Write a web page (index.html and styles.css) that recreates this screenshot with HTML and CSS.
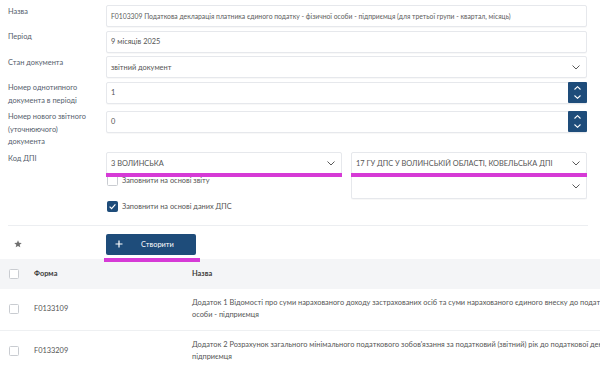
FILE: index.html
```html
<!DOCTYPE html>
<html lang="uk">
<head>
<meta charset="utf-8">
<title>Створення документа</title>
<link rel="stylesheet" href="styles.css">
</head>
<body>
<div class="page">
  <form class="form">
    <div class="row">
      <div class="lbl">Назва</div>
      <div class="input name">F0103309 Податкова декларація платника єдиного податку - фізичної особи - підприємця (для третьої групи - квартал, місяць)</div>
    </div>
    <div class="row">
      <div class="lbl">Період</div>
      <div class="input">9 місяців 2025</div>
    </div>
    <div class="row">
      <div class="lbl">Стан документа</div>
      <div class="input select">звітний документ
        <svg class="chev" viewBox="0 0 8 5" width="8" height="5"><polyline points="0.5,0.5 4,4 7.5,0.5"/></svg>
      </div>
    </div>
    <div class="row">
      <div class="lbl">Номер однотипного документа в періоді</div>
      <div class="input num">1
        <span class="spin">
          <svg viewBox="0 0 7 4" width="7" height="4"><polyline points="0.5,3.5 3.5,0.7 6.5,3.5"/></svg>
          <svg viewBox="0 0 7 4" width="7" height="4"><polyline points="0.5,0.5 3.5,3.3 6.5,0.5"/></svg>
        </span>
      </div>
    </div>
    <div class="row">
      <div class="lbl">Номер нового звітного (уточнюючого) документа</div>
      <div class="input num">0
        <span class="spin">
          <svg viewBox="0 0 7 4" width="7" height="4"><polyline points="0.5,3.5 3.5,0.7 6.5,3.5"/></svg>
          <svg viewBox="0 0 7 4" width="7" height="4"><polyline points="0.5,0.5 3.5,3.3 6.5,0.5"/></svg>
        </span>
      </div>
    </div>
    <div class="row">
      <div class="lbl">Код ДПІ</div>
      <div class="dpi">
        <div class="col">
          <div class="input select hl">3 ВОЛИНСЬКА
            <svg class="chev" viewBox="0 0 8 5" width="8" height="5"><polyline points="0.5,0.5 4,4 7.5,0.5"/></svg>
          </div>
          <div class="checks">
            <div class="check"><span class="box"></span>Заповнити на основі звіту</div>
            <div class="check"><span class="box on"><svg viewBox="0 0 11 11" width="11" height="11"><polyline points="2.6,5.6 4.6,7.6 8.4,3.4"/></svg></span>Заповнити на основі даних ДПС</div>
          </div>
        </div>
        <div class="col">
          <div class="input select hl">17 ГУ ДПС У ВОЛИНСЬКІЙ ОБЛАСТІ, КОВЕЛЬСЬКА ДПІ
            <svg class="chev" viewBox="0 0 8 5" width="8" height="5"><polyline points="0.5,0.5 4,4 7.5,0.5"/></svg>
          </div>
          <div class="input select tall">
            <svg class="chev" viewBox="0 0 8 5" width="8" height="5"><polyline points="0.5,0.5 4,4 7.5,0.5"/></svg>
          </div>
        </div>
      </div>
    </div>
  </form>
  <div class="sep"></div>
  <div class="toolbar">
    <svg class="star" viewBox="0 0 10 10" width="8" height="8"><polygon points="5,0.3 6.3,3.4 9.7,3.6 7.1,5.8 7.9,9.2 5,7.4 2.1,9.2 2.9,5.8 0.3,3.6 3.7,3.4"/></svg>
    <button type="button" class="btn hl-btn">
      <svg viewBox="0 0 8 8" width="8" height="8"><path d="M4 0.5V7.5M0.5 4H7.5"/></svg>
      <span>Створити</span>
    </button>
  </div>
  <div class="table-wrap">
    <table class="tbl">
      <colgroup><col class="c-chk"><col class="c-form"><col class="c-name"></colgroup>
      <thead>
        <tr><th><span class="box"></span></th><th>Форма</th><th>Назва</th></tr>
      </thead>
      <tbody>
        <tr>
          <td><span class="box"></span></td>
          <td>F0133109</td>
          <td>Додаток 1 Відомості про суми нарахованого доходу застрахованих осіб та суми нарахованого єдиного внеску до податкової декларації платника єдиного податку - фізичної особи - підприємця</td>
        </tr>
        <tr>
          <td><span class="box"></span></td>
          <td>F0133209</td>
          <td>Додаток 2 Розрахунок загального мінімального податкового зобов'язання за податковий (звітний) рік до податкової декларації платника єдиного податку - фізичної особи - підприємця</td>
        </tr>
      </tbody>
    </table>
  </div>
</div>
</body>
</html>
```

FILE: styles.css
```css
* { box-sizing: border-box; }
html, body { margin: 0; padding: 0; background: #fff; }
body {
  font-family: Lato, "Open Sans", "Liberation Sans", sans-serif;
  font-size: 7.4px;
  color: #555;
  width: 600px;
  height: 366px;
  overflow: hidden;
}
.page { width: 600px; }

.form {
  padding: 5px 13px 0 8px;
  display: flex;
  flex-direction: column;
  gap: 3.5px;
}
.row {
  display: flex;
  align-items: flex-start;
}
.lbl {
  width: 98px;
  flex: none;
  padding: 0.5px 14px 0 0;
  line-height: 12.5px;
  color: #55606c;
}
.input {
  position: relative;
  flex: 1;
  min-width: 0;
  height: 22px;
  border: 1px solid #e6e8ec;
  border-radius: 2px;
  padding: 0 4px;
  display: flex;
  align-items: center;
  white-space: nowrap;
  color: #555;
  background: #fff;
  box-shadow: 0 1px 1px rgba(0,0,0,0.03);
}
.input.name { font-size: 6.8px; color: #5c5c5c; }
.select { padding-right: 24px; }
.chev {
  position: absolute;
  right: 6px;
  top: 50%;
  margin-top: -2.5px;
  fill: none;
  stroke: #5a5a5a;
  stroke-width: 1;
}
.spin {
  position: absolute;
  right: -1px;
  top: -1px;
  width: 19px;
  height: 21px;
  background: #1e4c7a;
  border-radius: 1px;
  display: flex;
  flex-direction: column;
  align-items: center;
  justify-content: center;
  gap: 5px;
}
.spin svg { fill: none; stroke: #fff; stroke-width: 1.1; }

.dpi {
  flex: 1;
  display: flex;
  gap: 9px;
}
.dpi .col {
  flex: 1;
  min-width: 0;
  display: flex;
  flex-direction: column;
}
.dpi .col .input { flex: none; }
.hl::after {
  content: "";
  position: absolute;
  left: -1px;
  right: -1px;
  top: 100%;
  height: 3.5px;
  background: #d63ad6;
  z-index: 2;
}
.tall { height: 25px; border-top: none; }

.checks {
  display: flex;
  flex-direction: column;
  padding: 1px 0 0 1px;
}
.check {
  display: flex;
  align-items: center;
  gap: 4px;
  height: 11px;
  color: #555;
}
.check + .check { margin-top: 14.5px; }
.box {
  display: inline-block;
  width: 11px;
  height: 11px;
  border: 1px solid #c9ccd1;
  border-radius: 1.5px;
  background: #fff;
  flex: none;
  vertical-align: middle;
}
.box.on {
  background: #1e4c7a;
  border-color: #1e4c7a;
  position: relative;
}
.box.on svg {
  position: absolute;
  left: -1px;
  top: -1px;
  fill: none;
  stroke: #fff;
  stroke-width: 1.2;
}

.sep {
  margin: 13px 12px 0 8px;
  height: 1px;
  background: #eceef1;
}

.toolbar {
  display: flex;
  align-items: center;
  padding: 8px 0 0 14px;
}
.star { fill: #707070; }
.btn {
  position: relative;
  margin-left: 84px;
  width: 90px;
  height: 21px;
  border: none;
  border-radius: 2px;
  background: #1e4c7a;
  color: #fff;
  font: inherit;
  display: flex;
  align-items: center;
  padding: 0 0 0 9px;
  gap: 18px;
  cursor: pointer;
}
.btn svg { fill: none; stroke: #fff; stroke-width: 1.2; }
.hl-btn::after {
  content: "";
  position: absolute;
  left: -2px;
  right: -4px;
  top: 24px;
  height: 4px;
  background: #d63ad6;
  z-index: 2;
}

.table-wrap { margin-top: 4px; overflow: hidden; width: 600px; }
.tbl {
  width: 800px;
  table-layout: fixed;
  border-collapse: collapse;
}
.c-chk { width: 34px; }
.c-form { width: 158px; }
.c-name { width: 608px; }
.tbl th {
  background: #f4f5f7;
  height: 30px;
  text-align: left;
  font-weight: 700;
  color: #3c3c3c;
  padding: 0;
}
.tbl th:first-child, .tbl td:first-child { padding-left: 9px; }
.tbl td {
  padding: 8px 0;
  line-height: 12.5px;
  border-bottom: 1px solid #eef0f2;
  vertical-align: middle;
  color: #555;
}
.tbl .box { width: 10px; height: 10px; display: block; }
```
